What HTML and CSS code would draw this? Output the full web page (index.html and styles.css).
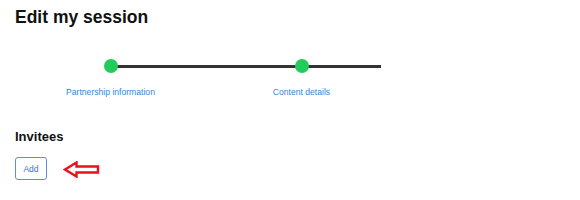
FILE: index.html
```html
<!DOCTYPE html>
<html>
<head>
  <meta charset="utf-8">
  <title>Edit my session</title>
  <link rel="stylesheet" href="styles.css">
</head>
<body>
  <div class="page">
    <h1 class="title">Edit my session</h1>

    <div class="stepper">
      <div class="step">
        <span class="dot"></span>
        <span class="label">Partnership information</span>
      </div>
      <div class="step">
        <span class="dot"></span>
        <span class="label">Content details</span>
      </div>
    </div>

    <h2 class="section-title">Invitees</h2>
    <div class="actions">
      <button class="btn">Add</button>
      <svg class="arrow" width="38" height="17" viewBox="0 0 38 17">
        <path d="M2 8.5 L13.5 1.5 L13.5 5.5 L35 5.5 L35 11.5 L13.5 11.5 L13.5 15.5 Z" fill="none" stroke="#e8121a" stroke-width="2.4" stroke-linejoin="miter"/>
      </svg>
    </div>
  </div>
</body>
</html>
```

FILE: styles.css
```css
body {
  margin: 0;
  font-family: "Liberation Sans", Arial, sans-serif;
  color: #111;
  background: #fff;
}
.page {padding: 5px 15px 0;}

.title {
  margin: 0;
  font-size: 17.5px;
  line-height: 24px;
  font-weight: bold;
}

.stepper {
  position: relative;
  display: flex;
  margin-top: 30px;
}
.stepper:before {
  content: "";
  position: absolute;
  top: 6px; left: 95px;
  width: 271px; height: 3px;
  background: #333;
}
.step {
  position: relative;
  width: 191px;
  display: flex;
  flex-direction: column;
  align-items: center;
}
.dot {
  width: 14px; height: 14px;
  border-radius: 50%;
  background: #22cc5a;
}
.label {
  margin-top: 14px;
  font-size: 8.6px;
  color: #3584de;
}

.section-title {
  margin: 32px 0 0;
  font-size: 13px;
  line-height: 16px;
  font-weight: bold;
}

.actions {
  display: flex;
  align-items: center;
  gap: 16px;
  margin-top: 12px;
}
.btn {
  width: 32px; height: 23px;
  padding: 0;
  border: 1px solid #5b8ee6;
  border-radius: 3px;
  background: #fff;
  color: #3a6fd0;
  font-family: "Liberation Sans", Arial, sans-serif;
  font-size: 8.5px;
}
.arrow {margin-top: 2px;}
```
